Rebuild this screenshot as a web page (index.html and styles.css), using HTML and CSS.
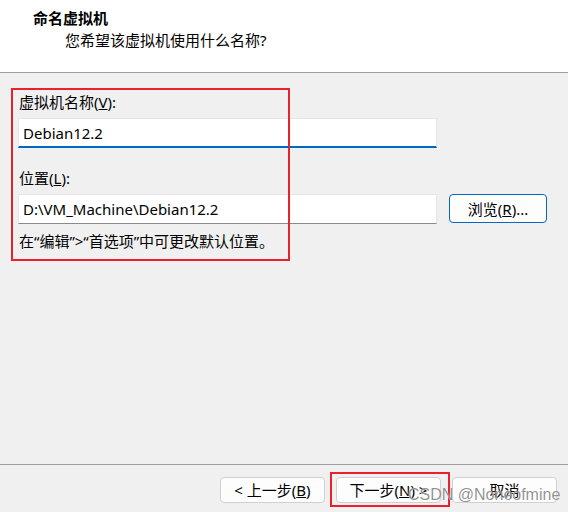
FILE: index.html
```html
<!DOCTYPE html>
<html lang="zh-CN">
<head>
<meta charset="utf-8">
<title>命名虚拟机</title>
<link rel="stylesheet" href="styles.css">
</head>
<body>
<div class="dialog">
  <header class="header">
    <div class="title">命名虚拟机</div>
    <div class="subtitle">您希望该虚拟机使用什么名称?</div>
  </header>
  <main class="content">
    <label class="label">虚拟机名称(<u>V</u>):</label>
    <div class="row">
      <div class="input focused">Debian12.2</div>
    </div>
    <label class="label second">位置(<u>L</u>):</label>
    <div class="row">
      <div class="input">D:\VM_Machine\Debian12.2</div>
      <button class="btn browse">浏览(<u>R</u>)...</button>
    </div>
    <div class="hint">在“编辑”&gt;“首选项”中可更改默认位置。</div>
    <div class="mark mark-form"></div>
  </main>
  <footer class="footer">
    <button class="btn nav">&lt; 上一步(<u>B</u>)</button>
    <button class="btn nav">下一步(<u>N</u>) &gt;</button>
    <button class="btn nav">取消</button>
    <div class="mark mark-next"></div>
    <div class="watermark">CSDN @Noneofmine</div>
  </footer>
</div>
</body>
</html>
```
FILE: styles.css
```css
* { box-sizing: border-box; }
html, body { margin: 0; padding: 0; }
body {
  width: 568px;
  height: 512px;
  overflow: hidden;
  background: #f0f0f0;
  font-family: "Noto Sans", "Noto Sans CJK SC", sans-serif;
  font-size: 15px;
  color: #000;
}
.dialog {
  display: flex;
  flex-direction: column;
  height: 512px;
}
.header {
  height: 73px;
  background: #fff;
  border-bottom: 1px solid #a0a0a0;
  padding-top: 7px;
}
.title {
  padding-left: 33px;
  font-weight: bold;
  line-height: 22px;
  height: 22px;
}
.subtitle {
  padding-left: 65px;
  line-height: 22px;
  height: 22px;
}
.content {
  position: relative;
  flex: 1;
  padding: 19px 0 0 19px;
  display: flex;
  flex-direction: column;
}
.label {
  display: block;
  line-height: 20px;
  height: 20px;
  margin-bottom: 6px;
}
.label.second { margin-top: 20px; }
.row {
  display: flex;
  align-items: flex-start;
  gap: 12px;
}
.input {
  width: 419px;
  height: 30px;
  background: #fff;
  border: 1px solid #e6e6e6;
  border-bottom: 1px solid #8a8a8a;
  padding-left: 4px;
  line-height: 28px;
  margin-left: -1px;
}
.input.focused {
  border-bottom: 2px solid #0067c0;
}
.btn {
  font-family: inherit;
  font-size: 15px;
  color: #000;
  background: #fdfdfd;
  border: 1px solid #d0d0d0;
  border-radius: 4px;
  padding: 0;
  margin: 0;
}
.browse {
  width: 98px;
  height: 29px;
  border-color: #0067c0;
}
.hint {
  margin-top: 7px;
  line-height: 20px;
}
.footer {
  position: relative;
  height: 48px;
  border-top: 1px solid #a0a0a0;
  display: flex;
  justify-content: flex-end;
  gap: 11px;
  padding: 12px 11px 0 0;
}
.nav {
  width: 105px;
  height: 26px;
  line-height: 22px;
}
.mark {
  position: absolute;
  border: 2px solid #e8212b;
  pointer-events: none;
}
.mark-form {
  left: 11px;
  top: 15px;
  width: 279px;
  height: 173px;
}
.mark-next {
  left: 330px;
  top: 7px;
  width: 120px;
  height: 35px;
}
.watermark {
  position: absolute;
  left: 408px;
  top: 21px;
  font-family: "Liberation Sans", sans-serif;
  font-size: 16px;
  color: rgba(110, 110, 110, 0.75);
  text-shadow: 0 0 1px #fff;
  pointer-events: none;
}
```
